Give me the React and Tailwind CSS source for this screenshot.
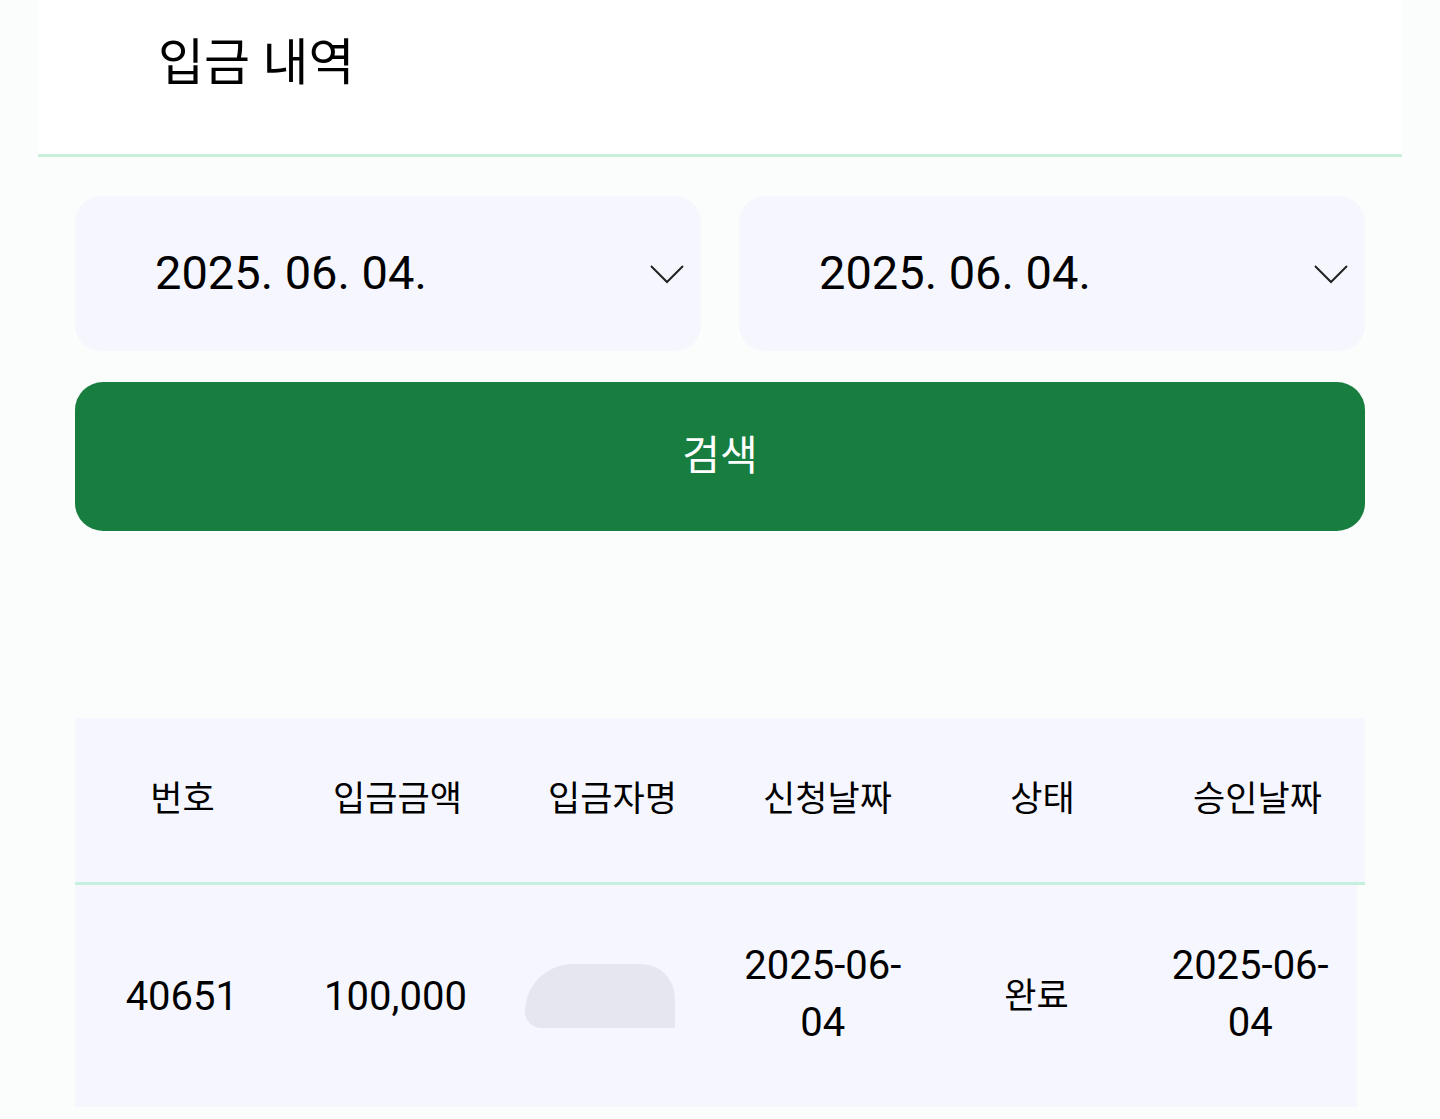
import { useState } from 'react';

const FONT = { fontFamily: 'Roboto, "Noto Sans CJK KR", sans-serif' };

const columns = ['번호', '입금금액', '입금자명', '신청날짜', '상태', '승인날짜'];

const deposits = [
  { id: '40651', amount: '100,000', requested: '2025-06-04', status: '완료', approved: '2025-06-04' },
];

function Chevron() {
  return (
    <svg width="36" height="20" viewBox="0 0 36 20" fill="none" stroke="#222" strokeWidth="2">
      <path d="M2 2 L18 18 L34 2" />
    </svg>
  );
}

function DateSelect({ value }) {
  return (
    <div className="flex-1 h-[155px] rounded-[26px] bg-[#f6f7fe] flex items-center justify-between pl-[80px] pr-[16px]">
      <span className="text-[47px] text-black">{value}</span>
      <Chevron />
    </div>
  );
}

export default function App() {
  const [from] = useState('2025. 06. 04.');
  const [to] = useState('2025. 06. 04.');

  return (
    <div className="min-h-screen bg-[#fbfdfc]" style={FONT}>
      <div className="mx-[38px]">
        <div className="h-[154px] bg-white flex items-center pl-[120px] pb-[28px]">
          <h1 className="text-[50px] text-black">입금 내역</h1>
        </div>
        <div className="h-[3px] bg-[#c8efd8]" />

        <div className="px-[37px] pt-[39px]">
          <div className="flex gap-[38px]">
            <DateSelect value={from} />
            <DateSelect value={to} />
          </div>

          <button className="mt-[31px] w-full h-[149px] rounded-[28px] bg-[#177e3f] text-white text-[41px]">
            검색
          </button>

          <div className="mt-[187px]">
            <div className="grid grid-cols-6 h-[164px] bg-[#f6f7fe] items-center text-center text-[35px] text-black">
              {columns.map((c) => (
                <div key={c}>{c}</div>
              ))}
            </div>
            <div className="h-[3px] bg-[#c5efdf]" />
            {deposits.map((d) => (
              <div
                key={d.id}
                className="grid grid-cols-6 w-[1282px] h-[222px] bg-[#f6f7fe] items-center text-center text-[40px] leading-[57px] text-black"
              >
                <div>{d.id}</div>
                <div>{d.amount}</div>
                <div className="flex justify-center pr-[18px]">
                  {/* masked depositor name */}
                  <div className="w-[150px] h-[64px] bg-[#e6e6ef] rounded-tl-[70px] rounded-tr-[50px] rounded-bl-[24px]" />
                </div>
                <div className="px-[20px] pb-[5px]">{d.requested}</div>
                <div className="text-[35px]">{d.status}</div>
                <div className="px-[20px] pb-[5px]">{d.approved}</div>
              </div>
            ))}
          </div>
        </div>
      </div>
    </div>
  );
}
